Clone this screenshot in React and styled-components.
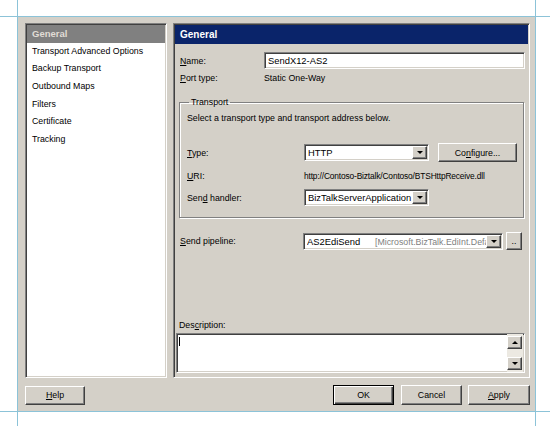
import React from 'react';
import styled, { createGlobalStyle, css } from 'styled-components';

const GlobalStyle = createGlobalStyle`
  body {
    margin: 0;
    background: #ffffff;
    font-family: "Liberation Sans", Arial, sans-serif;
    font-size: 8.8px;
    color: #000000;
  }
`;

const sunken = css`
  border: 1px solid;
  border-color: #808080 #ffffff #ffffff #808080;
  box-shadow: inset 1px 1px 0 #404040, inset -1px -1px 0 #d4d0c8;
`;

const raised = css`
  border: 1px solid;
  border-color: #ffffff #404040 #404040 #ffffff;
  box-shadow: inset -1px -1px 0 #808080;
`;

const Page = styled.div`
  position: relative;
  width: 550px;
  height: 426px;
  padding: 17px 0 0 18px;
  box-sizing: border-box;
  overflow: hidden;
`;

const CropLine = styled.div`
  position: absolute;
  background: #8cc3d8;
  ${(p) =>
    p.vertical
      ? css`
          top: 0;
          bottom: 0;
          left: ${p.at}px;
          width: 1px;
        `
      : css`
          left: 0;
          right: 0;
          top: ${p.at}px;
          height: 1px;
        `}
`;

const Dialog = styled.div`
  width: 517px;
  height: 394px;
  background: #d4d0c8;
  box-sizing: border-box;
  padding: 6px 5px 5px 7px;
  display: flex;
  flex-direction: column;
`;

const Body = styled.div`
  display: flex;
  gap: 6px;
  height: 355px;
`;

const NavList = styled.div`
  ${sunken};
  width: 142px;
  flex-shrink: 0;
  background: #ffffff;
  box-sizing: border-box;
  padding: 1px;
  display: flex;
  flex-direction: column;
`;

const NavItem = styled.div`
  height: 17.7px;
  line-height: 17.7px;
  padding-left: 5px;
  white-space: nowrap;
  ${(p) =>
    p.selected &&
    css`
      background: #808080;
      color: #e0ddd6;
      font-weight: bold;
      font-size: 9.5px;
    `}
`;

const Panel = styled.div`
  ${sunken};
  flex: 1;
  min-width: 0;
  box-sizing: border-box;
  padding: 1px;
  display: flex;
  flex-direction: column;
`;

const PanelHeader = styled.div`
  background: #0a246a;
  color: #ffffff;
  font-weight: bold;
  font-size: 10px;
  height: 19px;
  line-height: 19px;
  padding-left: 5px;
`;

const Content = styled.div`
  padding: 8px 3px 0 4px;
  display: flex;
  flex-direction: column;
`;

const Row = styled.div`
  display: flex;
  align-items: center;
  height: ${(p) => p.h || 17}px;
  margin-top: ${(p) => p.mt || 0}px;
  white-space: nowrap;
`;

const Label = styled.div`
  width: ${(p) => p.w}px;
  flex-shrink: 0;
  padding-left: ${(p) => p.pl || 0}px;
  box-sizing: border-box;
`;

const U = styled.span`
  text-decoration: underline;
`;

const TextBox = styled.div`
  ${sunken};
  background: #ffffff;
  box-sizing: border-box;
  height: ${(p) => p.h || 17}px;
  flex: ${(p) => (p.w ? 'none' : 1)};
  width: ${(p) => (p.w ? `${p.w}px` : 'auto')};
  padding-left: 3px;
  display: flex;
  align-items: center;
  overflow: hidden;
  white-space: nowrap;
`;

const SelectText = styled.div`
  flex: 1;
  overflow: hidden;
  white-space: nowrap;
  font-size: 9.4px;
`;

const Main = styled.span`
  display: inline-block;
  width: 68px;
`;

const Dim = styled.span`
  color: #808080;
  font-size: 8.8px;
`;

const Arrow = styled.div`
  ${raised};
  background: #d4d0c8;
  width: 15px;
  height: 13px;
  box-sizing: border-box;
  margin-right: 1px;
  display: flex;
  align-items: center;
  justify-content: center;
  flex-shrink: 0;
  &::after {
    content: '';
    border-left: 3px solid transparent;
    border-right: 3px solid transparent;
    border-${(p) => (p.up ? 'bottom' : 'top')}: 3px solid #000000;
  }
`;

const Value = styled.div`
  white-space: nowrap;
`;

const Uri = styled(Value)`
  font-size: 8.4px;
  letter-spacing: -0.15px;
`;

const Group = styled.fieldset`
  margin: 10px 1px 0 0;
  padding: 0 0 11px 7px;
  border: 1px solid #808080;
  box-shadow: 1px 1px 0 #ffffff, inset 1px 1px 0 #ffffff;
  border-radius: 0;
  display: flex;
  flex-direction: column;
  min-width: 0;
`;

const Legend = styled.legend`
  padding: 0 2px;
  margin-left: 2px;
  line-height: 12px;
`;

const Button = styled.div`
  ${raised};
  background: #d4d0c8;
  box-sizing: border-box;
  width: ${(p) => p.w}px;
  height: ${(p) => p.h || 19}px;
  display: flex;
  align-items: center;
  justify-content: center;
  margin-left: ${(p) => p.ml || 0}px;
  flex-shrink: 0;
  ${(p) =>
    p.primary &&
    css`
      border-color: #000000;
      box-shadow: inset 1px 1px 0 #ffffff, inset -1px -1px 0 #404040, inset -2px -2px 0 #808080;
    `}
`;

const Spacer = styled.div`
  flex: 1;
`;

const DescBox = styled.div`
  ${sunken};
  background: #ffffff;
  box-sizing: border-box;
  height: 40px;
  margin: 1px 0 0 -3px;
  display: flex;
`;

const Caret = styled.div`
  width: 1px;
  height: 9px;
  background: #000000;
  margin: 3px 0 0 2px;
`;

const ScrollBar = styled.div`
  margin-left: auto;
  width: 16px;
  background: #ece9e2;
  display: flex;
  flex-direction: column;
  justify-content: space-between;
  padding: 2px 0;
  box-sizing: border-box;
  margin-right: 1px;
`;

const Footer = styled.div`
  display: flex;
  align-items: center;
  margin-top: 7px;
`;

const navItems = [
  'Transport Advanced Options',
  'Backup Transport',
  'Outbound Maps',
  'Filters',
  'Certificate',
  'Tracking',
];

export default function App() {
  return (
    <Page>
      <GlobalStyle />
      <Dialog>
        <Body>
          <NavList>
            <NavItem selected>General</NavItem>
            {navItems.map((n) => (
              <NavItem key={n}>{n}</NavItem>
            ))}
          </NavList>
          <Panel>
            <PanelHeader>General</PanelHeader>
            <Content>
              <Row>
                <Label w={85} pl={1}>
                  <U>N</U>ame:
                </Label>
                <TextBox>
                  <SelectText>SendX12-AS2</SelectText>
                </TextBox>
              </Row>
              <Row>
                <Label w={85} pl={1}>
                  <U>P</U>ort type:
                </Label>
                <Value>Static One-Way</Value>
              </Row>
              <Group>
                <Legend>Transport</Legend>
                <Row h={14} mt={3}>Select a transport type and transport address below.</Row>
                <Row h={19} mt={18}>
                  <Label w={117}>
                    <U>T</U>ype:
                  </Label>
                  <TextBox w={125}>
                    <SelectText>HTTP</SelectText>
                    <Arrow />
                  </TextBox>
                  <Button w={79} ml={9}>
                    Co<U>n</U>figure...
                  </Button>
                </Row>
                <Row h={18} mt={5}>
                  <Label w={117}>
                    <U>U</U>RI:
                  </Label>
                  <Uri>http://Contoso-Biztalk/Contoso/BTSHttpReceive.dll</Uri>
                </Row>
                <Row h={17} mt={4}>
                  <Label w={117}>
                    Sen<U>d</U> handler:
                  </Label>
                  <TextBox w={125}>
                    <SelectText>BizTalkServerApplication</SelectText>
                    <Arrow />
                  </TextBox>
                </Row>
              </Group>
              <Row h={18} mt={14}>
                <Label w={124} pl={1}>
                  <U>S</U>end pipeline:
                </Label>
                <TextBox w={200}>
                  <SelectText>
                    <Main>AS2EdiSend</Main>
                    <Dim>[Microsoft.BizTalk.EdiInt.Defa</Dim>
                  </SelectText>
                  <Arrow />
                </TextBox>
                <Button w={16} h={18} ml={3}>
                  ..
                </Button>
              </Row>
              <Row h={14} mt={68}>
                <Label w={100} pl={0}>
                  Des<U>c</U>ription:
                </Label>
              </Row>
              <DescBox>
                <Caret />
                <ScrollBar>
                  <Arrow up />
                  <Arrow />
                </ScrollBar>
              </DescBox>
            </Content>
          </Panel>
        </Body>
        <Footer>
          <Button w={60}>
            <U>H</U>elp
          </Button>
          <Spacer />
          <Button w={61} h={20} primary>
            OK
          </Button>
          <Button w={61} h={20} ml={7}>
            Cancel
          </Button>
          <Button w={62} h={20} ml={6}>
            <U>A</U>pply
          </Button>
        </Footer>
      </Dialog>
      <CropLine at={16} />
      <CropLine at={411} />
      <CropLine vertical at={17} />
      <CropLine vertical at={535} />
    </Page>
  );
}
